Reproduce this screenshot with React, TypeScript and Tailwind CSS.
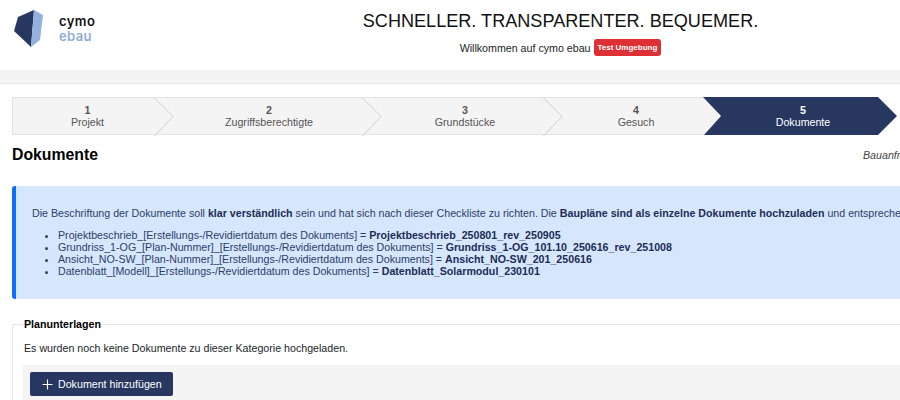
const steps = [
  { n: "1", t: "Projekt", w: "w-[150px]", c: "left-[141px]" },
  { n: "2", t: "Zugriffsberechtigte", w: "w-[214px]", c: "left-[200px]" },
  { n: "3", t: "Grundstücke", w: "w-[178px]", c: "left-[167px]" },
  { n: "4", t: "Gesuch", w: "w-[164px]", c: "" },
];

function Chevron({ c }: { c: string }) {
  return (
    <svg className={`absolute top-0 z-10 ${c} h-[38px] w-[20px] overflow-visible`} viewBox="0 0 20 38" fill="none">
      <path d="M0.5 0 L-18 18.5 L0.5 38" stroke="#f0f0f0" strokeWidth="1" />
      <path d="M0.5 0 L19 18.5 L0.5 38" stroke="#cfcfcf" strokeWidth="1" />
    </svg>
  );
}

export default function App() {
  return (
    <div className="h-[400px] w-[900px] overflow-hidden bg-white text-[10.67px] text-[#212529] [font-family:'Liberation_Sans',Arial,sans-serif]">
      <header className="flex h-[70px]">
        <div className="flex w-[230px] items-start">
          <svg className="ml-[14px] mt-[10px] h-[38px] w-[30px]" viewBox="14 10 30 38">
            <polygon points="34,10 18,17 14,31 31,47" fill="#27375f" />
            <polygon points="34,10 43,15 40,40 31,47" fill="#94b1dd" />
          </svg>
          <div className="ml-[15px] mt-[14px] text-[13px] leading-[15px] font-semibold tracking-[0.4px] [font-family:Inter,sans-serif]">
            <div className="text-[#111]">cymo</div>
            <div className="text-[#8fadd8]">ebau</div>
          </div>
        </div>
        <div className="ml-[-8px] flex w-[677px] flex-col items-center">
          <h1 className="mt-[10px] text-[18.1px] leading-[22px] text-[#111]">SCHNELLER. TRANSPARENTER. BEQUEMER.</h1>
          <div className="mt-[7px] flex items-center gap-[3px] text-[#212529]">
            <span>Willkommen auf cymo ebau</span>
            <span className="rounded-[3px] bg-[#dc3035] px-[4px] py-[3px] text-[8px] leading-[11px] font-bold text-white">Test Umgebung</span>
          </div>
        </div>
      </header>
      <div className="h-[14px] border-b border-[#e6e6e6] bg-[#f4f4f4]" />
      <main className="px-[12px] pt-[13px]">
        <nav className="relative flex h-[38px] w-[876px]">
          {steps.map((s) => (
            <div key={s.n} className={`relative ${s.w} flex flex-col items-center justify-center border-y border-[#e3e3e3] bg-[#f4f4f4] text-[#555] first:border-l`}>
              <b className="leading-[12px]">{s.n}</b>
              <span className="leading-[13px]">{s.t}</span>
              {s.c && <Chevron c={s.c} />}
            </div>
          ))}
          <div className="relative z-20 flex w-[170px] flex-col items-center justify-center text-white">
            <svg className="absolute left-[-15px] top-0 h-[38px] w-[194px]" viewBox="0 0 194 38">
              <polygon points="0,0 175,0 194,19 175,38 1,38 18,19" fill="#27375f" />
            </svg>
            <b className="relative leading-[12px]">5</b>
            <span className="relative leading-[13px]">Dokumente</span>
          </div>
        </nav>
        <div className="mt-[11px] flex h-[18px] w-[900px] items-center justify-between">
          <h2 className="text-[15.8px] font-bold text-black">Dokumente</h2>
          <i className="w-[49px] overflow-hidden whitespace-nowrap text-[#444]">Bauanfrage</i>
        </div>
        <section className="mt-[22px] h-[113px] w-[1100px] rounded-[3px] border-l-4 border-[#0d6efd] bg-[#d6e6fd] pl-[16px] pt-[21px] text-[#2c4069]">
          <p className="whitespace-nowrap leading-[13px]">
            Die Beschriftung der Dokumente soll <b className="text-[#1c2d55]">klar verständlich</b> sein und hat sich nach dieser Checkliste zu richten. Die <b className="text-[#1c2d55]">Baupläne sind als einzelne Dokumente hochzuladen</b> und entsprechend zu benennen.
          </p>
          <ul className="mt-[9px] list-disc pl-[26px] leading-[12px] whitespace-nowrap">
            <li>Projektbeschrieb_[Erstellungs-/Revidiertdatum des Dokuments] = <b className="text-[#1c2d55]">Projektbeschrieb_250801_rev_250905</b></li>
            <li>Grundriss_1-OG_[Plan-Nummer]_[Erstellungs-/Revidiertdatum des Dokuments] = <b className="text-[#1c2d55]">Grundriss_1-OG_101.10_250616_rev_251008</b></li>
            <li>Ansicht_NO-SW_[Plan-Nummer]_[Erstellungs-/Revidiertdatum des Dokuments] = <b className="text-[#1c2d55]">Ansicht_NO-SW_201_250616</b></li>
            <li>Datenblatt_[Modell]_[Erstellungs-/Revidiertdatum des Dokuments] = <b className="text-[#1c2d55]">Datenblatt_Solarmodul_230101</b></li>
          </ul>
        </section>
        <section className="relative mt-[25px] w-[900px] border-l border-t border-[#e6e6e6] pl-[10px] pt-[16px]">
          <b className="absolute left-[10px] top-[-7px] bg-white px-[1px] leading-[13px] text-black">Planunterlagen</b>
          <p className="pl-[1px] leading-[14px]">Es wurden noch keine Dokumente zu dieser Kategorie hochgeladen.</p>
          <div className="mt-[10px] h-[40px] bg-[#f4f4f4] pl-[7px] pt-[7px]">
            <button className="flex h-[24px] w-[143px] items-center gap-[5px] whitespace-nowrap rounded-[2px] bg-[#27375f] pl-[12px] text-white">
              <svg className="h-[11px] w-[11px]" viewBox="0 0 11 11" stroke="white" strokeWidth="1.1"><path d="M5.5 0.5V10.5M0.5 5.5H10.5" /></svg>
              Dokument hinzufügen
            </button>
          </div>
        </section>
      </main>
    </div>
  );
}
